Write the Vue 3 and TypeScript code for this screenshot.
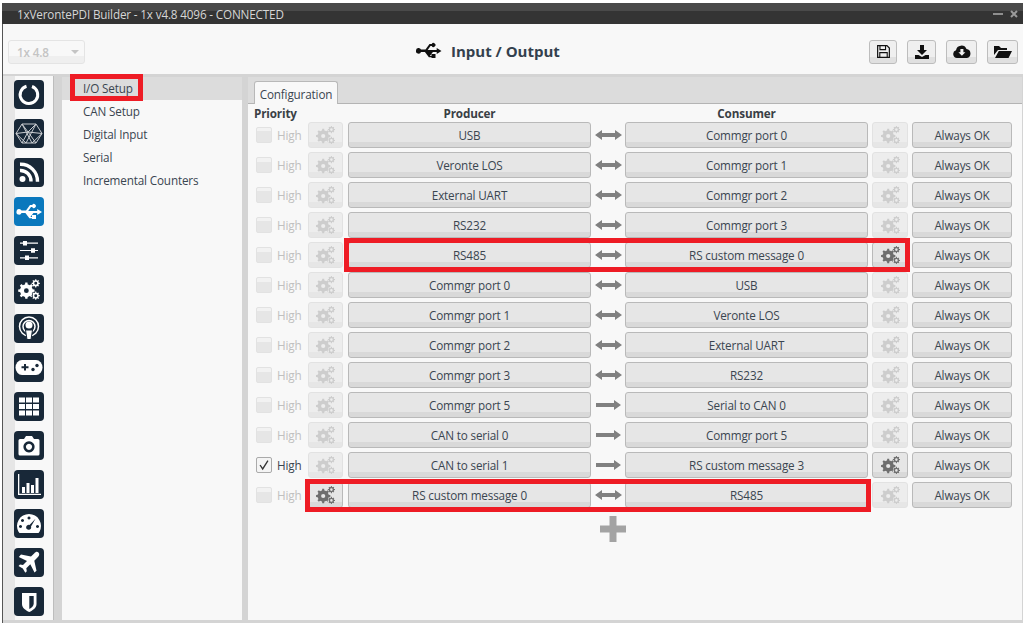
<script setup lang="ts">
interface Row { p: string; c: string; one?: boolean; checked?: boolean; lg?: boolean; rg?: boolean }
const rows: Row[] = [
  { p: 'USB', c: 'Commgr port 0' },
  { p: 'Veronte LOS', c: 'Commgr port 1' },
  { p: 'External UART', c: 'Commgr port 2' },
  { p: 'RS232', c: 'Commgr port 3' },
  { p: 'RS485', c: 'RS custom message 0', rg: true },
  { p: 'Commgr port 0', c: 'USB' },
  { p: 'Commgr port 1', c: 'Veronte LOS' },
  { p: 'Commgr port 2', c: 'External UART' },
  { p: 'Commgr port 3', c: 'RS232' },
  { p: 'Commgr port 5', c: 'Serial to CAN 0', one: true },
  { p: 'CAN to serial 0', c: 'Commgr port 5', one: true },
  { p: 'CAN to serial 1', c: 'RS custom message 3', one: true, checked: true, rg: true },
  { p: 'RS custom message 0', c: 'RS485', lg: true },
]
const menu = ['I/O Setup', 'CAN Setup', 'Digital Input', 'Serial', 'Incremental Counters']

function gear(cx: number, cy: number, ro: number, ri: number, hole: number, teeth: number): string {
  let d = ''
  const step = (Math.PI * 2) / teeth
  for (let i = 0; i < teeth; i++) {
    const a = i * step
    const pts: [number, number][] = [
      [ri, a - step * 0.5], [ri, a - step * 0.27], [ro, a - step * 0.17], [ro, a + step * 0.17], [ri, a + step * 0.27],
    ]
    for (const [r, t] of pts) {
      d += `${d === '' || d.endsWith('Z ') ? 'M' : 'L'}${(cx + r * Math.cos(t)).toFixed(2)} ${(cy + r * Math.sin(t)).toFixed(2)} `
    }
  }
  d += 'Z '
  d += `M${cx + hole} ${cy} A${hole} ${hole} 0 1 0 ${cx - hole} ${cy} A${hole} ${hole} 0 1 0 ${cx + hole} ${cy} Z `
  return d
}
const gears = gear(7.2, 10, 7.2, 5.6, 2.1, 8) + gear(15.4, 3.6, 3.6, 2.7, 1.3, 8) + gear(15.4, 14.4, 3.6, 2.7, 1.3, 8)
const usb = 'M0 10a2.6 2.6 0 0 1 5-1h4.5l4-5.5h2.2a2 2 0 1 1 0 2h-1.2l-2.8 4h9V7.5l4.8 3-4.8 3V11.4h-3.8l-3 4h1.6v-1.8h4v4h-4v-.8h-2.6l-4-5.4H5a2.6 2.6 0 0 1-5-1.4z'
</script>

<template>
  <div class="window">
    <div class="titlebar">
      <span class="title">1xVerontePDI Builder - 1x v4.8 4096 - CONNECTED</span>
      <span class="win-min"></span>
      <svg class="win-close" viewBox="0 0 8 8"><path d="M1 1l6 6M7 1L1 7" /></svg>
    </div>

    <div class="toolbar">
      <div class="combo"><span>1x 4.8</span><i class="caret"></i></div>
      <div class="heading">
        <svg class="usb-head" viewBox="0 0 26 20"><path :d="usb" transform="translate(0 -.5)" /></svg>
        <span>Input / Output</span>
      </div>
      <div class="tools">
        <button class="tool t1">
          <svg viewBox="0 0 14 14" width="13" height="13"><path fill="none" stroke="#111" stroke-width="1.3" d="M.7.7h10l2.6 2.6v10H.7z" /><path fill="none" stroke="#111" stroke-width="1.2" d="M3.2 1v4h6V1M3 13V8.2h8V13" /></svg>
        </button>
        <button class="tool t2">
          <svg viewBox="0 0 14 14" width="14" height="14"><path fill="#111" d="M5 0h4v5h3L7 10 2 5h3zM0 10h3.5L7 12l3.5-2H14v4H0z" /></svg>
        </button>
        <button class="tool t3">
          <svg viewBox="0 0 18 13" width="18" height="13"><path fill="#111" d="M4 13a4 4 0 0 1-1-7.8A5.5 5.5 0 0 1 13.5 4 4.6 4.6 0 0 1 14 13z" /><path fill="#f1f1f1" d="M7.4 4h3v3.2h2L8.900 10.800 5.400 7.200h2z" /></svg>
        </button>
        <button class="tool t4">
          <svg viewBox="0 0 18 13" width="18" height="13"><path fill="#111" d="M0 1h5l2 2h6v2H4L0 10zM4.800 6H18l-3.500 7H1z" /></svg>
        </button>
      </div>
    </div>

    <div class="main">
      <nav class="rail">
        <div class="ico">
          <svg viewBox="0 0 30 29"><path fill="none" stroke="#fff" stroke-width="3" d="M18 6.500a8.800 8.800 0 1 1-5.500-.2" /></svg>
        </div>
        <div class="ico">
          <svg viewBox="0 0 30 29"><path fill="none" stroke="#c9ccd0" stroke-width="1" d="M8 5h14l6 9.500-6 9.500H8L2 14.500zM8 5l6 8 8-8M2 14.500l12-1.500 14 1.500M8 24l6-11 8 11M8 5l10 19M22 5L12 24M2 14.500l10 9.500M28 14.500l-10 9.500" /></svg>
        </div>
        <div class="ico">
          <svg viewBox="0 0 30 29"><circle cx="8.500" cy="21" r="3" fill="#fff" /><path fill="none" stroke="#fff" stroke-width="3.400" d="M6 12.500a10.500 10.500 0 0 1 11 11M6 6.200a17 17 0 0 1 17.500 17.500" /></svg>
        </div>
        <div class="ico active">
          <svg viewBox="0 0 30 29"><path fill="#fff" :d="usb" transform="translate(2.500 4.500)" /></svg>
        </div>
        <div class="ico">
          <svg viewBox="0 0 30 29"><path fill="#fff" d="M6 6.500h18v1.200H6zM6 13.900h18v1.200H6zM6 21.300h18v1.200H6z" /><path fill="#fff" d="M9 5h4v4.500H9zM17 12.200h4v4.500h-4zM11 19.600h4v4.500h-4z" /></svg>
        </div>
        <div class="ico">
          <svg viewBox="-1 -1 21 20" class="pad"><path fill="#fff" fill-rule="evenodd" :d="gears" /></svg>
        </div>
        <div class="ico">
          <svg viewBox="0 0 30 29"><g fill="none" stroke="#fff"><circle cx="15" cy="12.500" r="9.500" stroke-width="1.500" /><circle cx="15" cy="12.500" r="6" stroke-width="1.500" /></g><circle cx="15" cy="11" r="3.500" fill="#fff" /><path fill="#fff" stroke="#182838" stroke-width="1" d="M11.500 16h7l-1.500 9.500h-4z" /></svg>
        </div>
        <div class="ico">
          <svg viewBox="0 0 30 29"><path fill="#fff" d="M8 7h14a6.500 7.500 0 0 1 0 15H8A6.500 7.500 0 0 1 8 7z" /><path fill="#182838" d="M7.500 13.200H10v-2.200h2v2.200h2.500v2H12v2.200h-2v-2.200H7.500z" /><circle cx="19" cy="16.500" r="1.700" fill="#182838" /><circle cx="23" cy="12.500" r="1.700" fill="#182838" /></svg>
        </div>
        <div class="ico">
          <svg viewBox="0 0 30 29"><path fill="#fff" d="M5 5.500h6v5H5zM12 5.500h6v5h-6zM19 5.500h6v5h-6zM5 12h6v5H5zM12 12h6v5h-6zM19 12h6v5h-6zM5 18.500h6v5H5zM12 18.500h6v5h-6zM19 18.500h6v5h-6z" /></svg>
        </div>
        <div class="ico">
          <svg viewBox="0 0 30 29"><path fill="#fff" fill-rule="evenodd" d="M6 8h4l2-3h6l2 3h4a1.500 1.500 0 0 1 1.500 1.500V23a1.500 1.500 0 0 1-1.500 1.500H6A1.500 1.500 0 0 1 4.500 23V9.500A1.500 1.500 0 0 1 6 8zM15 10.200a5.600 5.600 0 1 0 .01 0zM15 12.700a3.100 3.100 0 1 1-.01 0z" /></svg>
        </div>
        <div class="ico">
          <svg viewBox="0 0 30 29"><path fill="#fff" d="M4 4h1.300v19.700H27V25H4zM8 17h3v6H8zM12.500 13h3v10h-3zM17 15h3v8h-3zM21.500 8h3v15h-3z" /></svg>
        </div>
        <div class="ico">
          <svg viewBox="0 0 30 29"><path fill="#fff" fill-rule="evenodd" d="M15 5a12 12 0 0 1 10.500 17.800L24.500 24h-19l-1-1.200A12 12 0 0 1 15 5zM15 7.500a1.500 1.500 0 1 0 .01 0zM8.500 10a1.500 1.500 0 1 0 .01 0zM21.500 9.800l-6 6.200a2.500 2.500 0 1 0 1.500 1.500zM6.500 16a1.500 1.500 0 1 0 .01 0zM23.500 16a1.500 1.500 0 1 0 .01 0z" /></svg>
        </div>
        <div class="ico">
          <svg viewBox="0 0 30 29"><path fill="#fff" d="M24.500 4.500c1.500 1.500.5 3.500-.8 4.800l-3.400 3.400 2.200 10-2 1.800-4.200-8.200-4 4 .5 3-1.500 1.500-2.500-4.200-4.300-2.500 1.500-1.500 3 .5 4-4-8.200-4.200L7 6.400l10 2.200 3.400-3.400c1.300-1.300 2.700-2.100 4.100-.7z" /></svg>
        </div>
        <div class="ico">
          <svg viewBox="0 0 30 29"><path fill="#fff" fill-rule="evenodd" d="M8 6h14.500v11c0 4-4 6.500-7.200 8-3.300-1.500-7.300-4-7.300-8zM15.300 9v13c2.400-1.300 4.400-3 4.400-5.300V9z" /></svg>
        </div>
      </nav>

      <aside class="list">
        <div v-for="(m, i) in menu" :key="m" class="list-item" :class="{ sel: i === 0 }">{{ m }}</div>
      </aside>

      <section class="panel">
        <div class="tabbar"><div class="tab">Configuration</div></div>
        <div class="body">
          <div class="heads">
            <span class="h-pri">Priority</span>
            <span class="h-pro">Producer</span>
            <span class="h-con">Consumer</span>
          </div>
          <div v-for="r in rows" :key="r.p + r.c" class="row">
            <span class="check" :class="{ on: r.checked }">
              <svg v-if="r.checked" viewBox="0 0 16 16"><path fill="none" stroke="#333" stroke-width="1.500" d="M3.500 8l3 4.500 6-9.500" /></svg>
            </span>
            <span class="high" :class="{ on: r.checked }">High</span>
            <button class="btn gearbtn" :class="{ off: !r.lg }">
              <svg viewBox="0 0 19 18" width="19" height="18"><path fill-rule="evenodd" :d="gears" /></svg>
            </button>
            <button class="btn wide prod">{{ r.p }}</button>
            <span class="arrow">
              <svg viewBox="0 0 27 12" width="27" height="12">
                <path v-if="r.one" d="M1 4h18V1l7 5-7 5V8H1z" />
                <path v-else d="M0 6l7-5v3h13V1l7 5-7 5V8H7v3z" />
              </svg>
            </span>
            <button class="btn wide">{{ r.c }}</button>
            <button class="btn gearbtn right" :class="{ off: !r.rg }">
              <svg viewBox="0 0 19 18" width="19" height="18"><path fill-rule="evenodd" :d="gears" /></svg>
            </button>
            <button class="btn always">Always OK</button>
          </div>
          <svg class="plus" viewBox="0 0 26 26" width="26" height="26"><path d="M9.500 0h7v9.500H26v7h-9.500V26h-7v-9.500H0v-7h9.500z" /></svg>
        </div>
      </section>

      <div class="mark m1"></div>
      <div class="mark m2"></div>
      <div class="mark m3"></div>
    </div>
  </div>
</template>

<style>
html, body { margin: 0; background: #fff; }
</style>

<style scoped>
.window {
  box-sizing: border-box;
  width: 1026px;
  height: 623px;
  padding: 3px 3px 0 2px;
  display: flex;
  flex-direction: column;
  font-family: "Open Sans", "Noto Sans", sans-serif;
  font-size: 11.7px;
  letter-spacing: -0.15px;
  color: #3a4550;
  overflow: hidden;
}
.titlebar {
  height: 21px;
  flex: none;
  display: flex;
  align-items: center;
  background: linear-gradient(#4a4a4a 0 40%, #343434 40%);
  color: #d6d6d6;
  padding-left: 15px;
}
.title { flex: 1; }
.win-min { width: 10px; height: 2px; background: #8f8f8f; margin-right: 7px; }
.win-close { width: 8px; height: 8px; margin-right: 5px; stroke: #9a9a9a; stroke-width: 2; fill: none; }
.toolbar {
  height: 50px;
  flex: none;
  position: relative;
  display: flex;
  align-items: center;
  justify-content: space-between;
  box-sizing: border-box;
  background: #f8f8f8;
  padding: 5px 5px 0 5px;
  border-left: 1px solid #555;
}
.combo {
  width: 67px;
  height: 22px;
  border: 1px solid #e4e4e4;
  border-radius: 3px;
  background: linear-gradient(#f8f8f8 70%, #efefef 70%);
  color: #c4c4c4;
  font-weight: 600;
  display: flex;
  align-items: center;
  padding-left: 8px;
}
.caret { margin-left: 22px; border: 4px solid transparent; border-top-color: #c4c4c4; border-bottom: 0; }
.heading {
  position: absolute;
  left: 413px;
  top: 2px;
  height: 100%;
  display: flex;
  align-items: center;
  gap: 9px;
  font-size: 15px;
  letter-spacing: 0;
  font-weight: 700;
  color: #33404d;
}
.usb-head { width: 26px; height: 20px; fill: #111; }
.tools { display: flex; }
.tool {
  height: 24px;
  padding: 0;
  border: 1px solid #bdbdbd;
  border-radius: 3px;
  background: linear-gradient(#efefef 75%, #e0e0e0 75%);
  display: flex;
  align-items: center;
  justify-content: center;
}
.t1 { width: 28px; }
.t2 { width: 29px; margin-left: 10px; }
.t3 { width: 31px; margin-left: 10px; }
.t4 { width: 31px; margin-left: 10px; }
.main {
  flex: 1;
  position: relative;
  display: flex;
  min-height: 0;
  background: #d4d4d4;
  padding: 3px 1px 3px 0;
  border-left: 1px solid #555;
}
.rail {
  width: 51px;
  flex: none;
  margin-top: -1px;
  padding: 4px 0 0 11px;
  box-sizing: border-box;
  background: linear-gradient(90deg, #e6e6e6 12px, #f8f8f8 12px);
  display: flex;
  flex-direction: column;
  gap: 10px;
  border-right: 1px solid #bdbdbd;
}
.ico {
  width: 30px;
  height: 29px;
  border-radius: 4px;
  background: #182838;
  flex: none;
  display: flex;
}
.ico svg { width: 30px; height: 29px; }
.ico svg.pad { width: 24px; height: 23px; margin: 3px; }
.ico.active { background: #0a78bd; }
.list {
  width: 180px;
  flex: none;
  margin-left: 8px;
  background: #f8f8f8;
}
.list-item { height: 23px; line-height: 23px; padding-left: 21px; }
.list-item.sel { background: #dcdcdc; }
.panel {
  flex: 1;
  margin-left: 6px;
  display: flex;
  flex-direction: column;
  background: #f8f8f8;
  min-width: 0;
}
.tabbar {
  height: 27px;
  flex: none;
  background: #dcdcdc;
  border-bottom: 1px solid #b4b4b4;
  box-sizing: border-box;
  padding: 4px 0 0 6px;
}
.tab {
  width: 84px;
  height: 23px;
  line-height: 24px;
  text-align: center;
  box-sizing: border-box;
  background: #f8f8f8;
  border: 1px solid #b8b8b8;
  border-bottom: 0;
  border-radius: 3px 3px 0 0;
}
.body { padding: 0 0 0 6px; }
.heads {
  height: 18px;
  line-height: 18px;
  display: flex;
  font-weight: 700;
  color: #3a3f45;
}
.h-pri { width: 94px; }
.h-pro { width: 243px; text-align: center; }
.h-con { width: 243px; margin-left: 34px; text-align: center; }
.row {
  height: 26px;
  margin-bottom: 4px;
  display: flex;
  align-items: center;
}
.check {
  width: 16px;
  height: 16px;
  margin-left: 2px;
  box-sizing: border-box;
  border: 1px solid #e2e2e2;
  border-radius: 2px;
  background: linear-gradient(#f2f2f2 25%, #e6e6e6 25%);
  display: flex;
}
.check.on { border-color: #aaa; background: #f4f4f4; }
.high { width: 31px; margin-left: 5px; color: #c0c0c0; }
.high.on { color: #3a4550; }
.btn {
  height: 26px;
  padding: 0;
  box-sizing: border-box;
  border: 1px solid #b9b9b9;
  border-radius: 3px;
  background: linear-gradient(#e6e6e6 78%, #d9d9d9 78%);
  font: inherit;
  letter-spacing: inherit;
  color: inherit;
  display: flex;
  align-items: center;
  justify-content: center;
}
.gearbtn { width: 35px; fill: #6e6e6e; }
.gearbtn.off { fill: #cdcdcd; border-color: #e2e2e2; background: linear-gradient(#ededed 78%, #e6e6e6 78%); }
.gearbtn.right { width: 36px; margin-left: 4px; }
.wide { width: 243px; }
.prod { margin-left: 5px; }
.arrow { width: 34px; display: flex; justify-content: center; fill: #808080; }
.always { width: 100px; margin-left: 4px; }
.plus { display: block; margin: 8px 0 0 346px; fill: #a3a3a3; }
.mark { position: absolute; box-sizing: border-box; border: 5px solid #ee1c25; pointer-events: none; }
.m1 { left: 67px; top: 0; width: 73px; height: 27px; }
.m2 { left: 341px; top: 164px; width: 566px; height: 34px; }
.m3 { left: 302px; top: 405px; width: 566px; height: 33px; }
</style>
